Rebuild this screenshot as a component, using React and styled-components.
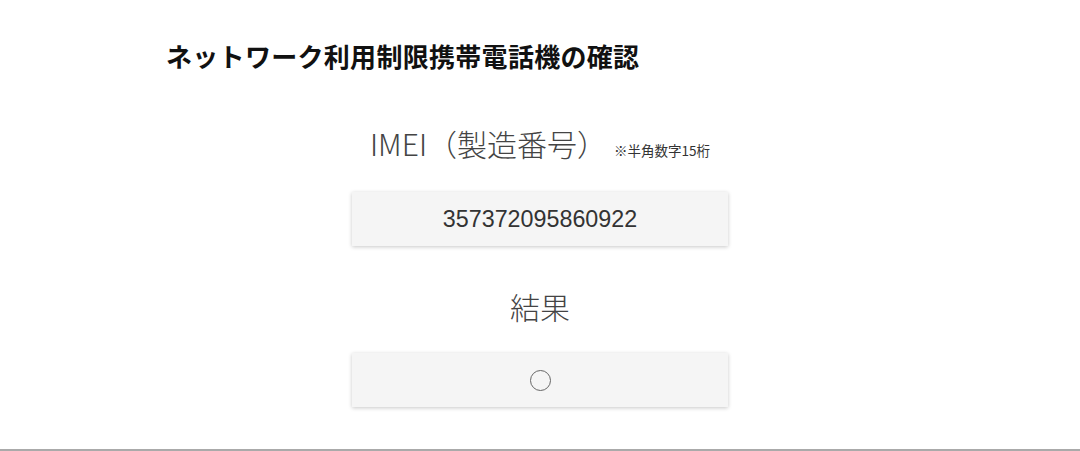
import React from 'react'
import styled, { createGlobalStyle } from 'styled-components'

const GlobalStyle = createGlobalStyle`
  html, body {
    margin: 0;
    padding: 0;
    background: #fff;
    font-family: "Noto Sans CJK JP", "Noto Sans", sans-serif;
  }
`;

const Page = styled.div`
  box-sizing: border-box;
  height: 451px;
  border-bottom: 2px solid #aaa;
  padding-top: 38px;
`;

const Title = styled.h1`
  margin: 0 0 0 166px;
  font-size: 26px;
  line-height: 36px;
  font-weight: 700;
  color: #111;
  letter-spacing: 0.3px;
`;

const Form = styled.div`
  display: flex;
  flex-direction: column;
  align-items: center;
  padding-top: 49px;
`;

const LabelRow = styled.div`
  display: flex;
  align-items: baseline;
  justify-content: center;
  gap: 7px;
  height: 40px;
  margin-bottom: ${props => props.gap}px;
`;

const Label = styled.span`
  font-size: 30px;
  line-height: 40px;
  font-weight: 300;
  color: #444;
`;

const Note = styled.span`
  font-size: 13.5px;
  color: #333;
`;

const Field = styled.div`
  width: 376px;
  height: 54px;
  display: flex;
  align-items: center;
  justify-content: center;
  background: #f5f5f5;
  box-shadow: 0 1px 4px rgba(0, 0, 0, 0.22);
  margin-bottom: ${props => props.gap || 0}px;
  color: #333;
`;

const Value = styled.span`
  font-family: "Liberation Sans", Arial, sans-serif;
  font-size: 23.3px;
`;

const Mark = styled.span`
  display: block;
  width: 19px;
  height: 19px;
  border: 1.5px solid #666;
  border-radius: 50%;
`;

export default function App() {
  return (
    <>
      <GlobalStyle />
      <Page>
        <Title>ネットワーク利用制限携帯電話機の確認</Title>
        <Form>
          <LabelRow gap={29}>
            <Label>IMEI（製造番号）</Label>
            <Note>※半角数字15桁</Note>
          </LabelRow>
          <Field gap={40}>
            <Value>357372095860922</Value>
          </Field>
          <LabelRow gap={27}>
            <Label>結果</Label>
          </LabelRow>
          <Field>
            <Mark aria-label="○" />
          </Field>
        </Form>
      </Page>
    </>
  )
}
